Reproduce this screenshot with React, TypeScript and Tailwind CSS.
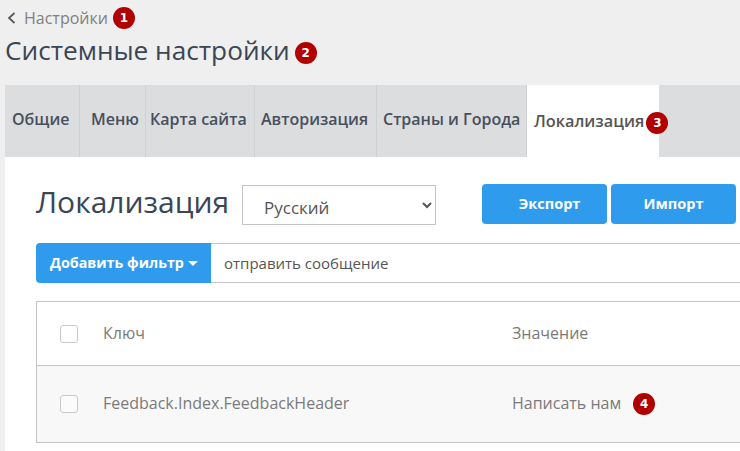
import React from 'react';

const Badge: React.FC<{ n: number; className?: string }> = ({ n, className = '' }) => (
  <span
    className={`relative inline-flex items-center justify-center w-[22px] h-[22px] shrink-0 rounded-full bg-[#b00000] text-white text-[12px] font-bold font-['DejaVu_Sans',sans-serif] ${className}`}
  >
    {n}
  </span>
);

const tabs = [
  { label: 'Общие', width: 'w-[75px]', align: 'pl-[7px]' },
  { label: 'Меню', width: 'w-[66px]', align: 'pl-[11px]' },
  { label: 'Карта сайта', width: 'w-[109px]', align: 'pl-[4px]' },
  { label: 'Авторизация', width: 'w-[122px]', align: 'pl-[6px]' },
  { label: 'Страны и Города', width: 'w-[150px]', align: 'pl-[6px]' },
];

export default function App() {
  return (
    <div className="w-[740px] h-[451px] overflow-hidden bg-[#efefef] font-['Open_Sans',sans-serif]">
      <div className="h-[85px] pl-[5px]">
        <div className="flex items-center h-[36px] text-[#808080] text-[16px]">
          <svg width="9" height="12" viewBox="0 0 9 12" fill="none" className="ml-[2px] mr-[8px]">
            <path d="M7.5 1 L2 6 L7.5 11" stroke="#555" strokeWidth="1.7" />
          </svg>
          <span>Настройки</span>
          <Badge n={1} className="ml-[5px]" />
        </div>
        <div className="flex items-center h-[30px] text-[#3b4654] text-[26.2px]">
          <span>Системные настройки</span>
          <Badge n={2} className="ml-[5px] mt-[4px]" />
        </div>
      </div>

      <div className="ml-[5px] bg-white h-[366px]">
        <div className="flex h-[72px] bg-[#dcdddf]">
          {tabs.map((t) => (
            <div
              key={t.label}
              className={`flex items-center ${t.width} ${t.align} pb-[4px] border-r border-[#cfd0d2] text-[16px] font-semibold text-[#47505c] whitespace-nowrap`}
            >
              {t.label}
            </div>
          ))}
          <div className="flex items-center w-[132px] h-[72px] pl-[7px] pt-[1px] bg-white text-[16.3px] font-semibold text-[#555] whitespace-nowrap">
            Локализация
            <Badge n={3} className="ml-[2px] mt-[3px]" />
          </div>
        </div>

        <div className="pl-[31px]">
          <div className="flex pt-[27px] h-[86px]">
            <div className="w-[206px] text-[30px] leading-[36px] text-[#3b4654] whitespace-nowrap">Локализация</div>
            <select className="w-[194px] h-[40px] mt-[1px] pl-[17px] pt-[4px] bg-white border border-[#c4c4c4] text-[17px] text-[#555]">
              <option>Русский</option>
            </select>
            <button className="w-[125px] h-[40px] ml-[46px] pl-[10px] rounded-[4px] bg-[#2f9bed] text-white text-[14.5px] font-bold">
              Экспорт
            </button>
            <button className="w-[125px] h-[40px] ml-[4px] rounded-[4px] bg-[#2f9bed] text-white text-[14.5px] font-bold">
              Импорт
            </button>
          </div>

          <div className="flex h-[40px] w-[720px]">
            <button className="flex items-center w-[175px] pl-[14px] rounded-l-[4px] bg-[#2f9bed] text-white text-[14.3px] font-bold whitespace-nowrap">
              Добавить фильтр
              <span className="ml-[4px] mt-[1px] border-x-[5px] border-x-transparent border-t-[5px] border-t-white" />
            </button>
            <div className="flex flex-1 items-center pl-[13px] bg-white border-y border-[#c4c4c4] text-[15px] text-[#555]">
              отправить сообщение
            </div>
          </div>

          <div className="w-[720px] mt-[18px] border-l border-y border-[#c4c4c4] text-[16px] text-[#7a7a7a]">
            <div className="flex items-center h-[64px] bg-white border-b border-[#c4c4c4]">
              <span className="w-[18px] h-[18px] ml-[23px] rounded-[3px] border border-[#c9c9c9] bg-white" />
              <span className="w-[409px] ml-[25px] pb-[2px]">Ключ</span>
              <span className="pb-[2px]">Значение</span>
            </div>
            <div className="flex items-center h-[76px] bg-[#f8f8f9]">
              <span className="w-[18px] h-[18px] ml-[23px] rounded-[3px] border border-[#c9c9c9] bg-white/40" />
              <span className="w-[409px] ml-[25px] pb-[2px]">Feedback.Index.FeedbackHeader</span>
              <span className="pb-[2px]">Написать нам</span>
              <Badge n={4} className="ml-[12px]" />
            </div>
          </div>
        </div>
      </div>
    </div>
  );
}
